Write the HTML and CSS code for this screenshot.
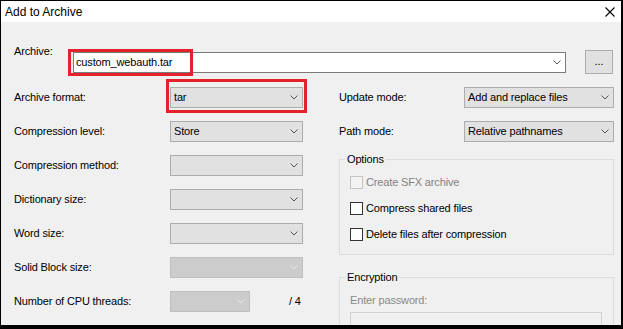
FILE: index.html
```html
<!DOCTYPE html>
<html>
<head>
<meta charset="utf-8">
<link rel="stylesheet" href="styles.css">
</head>
<body>
<div class="window">
  <div class="titlebar">
    <span class="title">Add to Archive</span>
    <svg class="close" width="10" height="10" viewBox="0 0 10 10"><path d="M0.5 0.5L9.5 9.5M9.5 0.5L0.5 9.5" stroke="#000" stroke-width="1.1" fill="none"/></svg>
  </div>
  <div class="content">
    <div class="archive-row">
      <span class="archive-label">Archive:</span>
      <div class="archive-input">
        <span class="value">custom_webauth.tar</span>
        <svg class="chev" width="8" height="5" viewBox="0 0 8 5"><path d="M0.5 0.5L4 4L7.5 0.5" stroke="#555" fill="none"/></svg>
        <span class="hl hl-archive"></span>
      </div>
      <button class="browse">...</button>
    </div>
    <div class="columns">
      <div class="col-left">
        <span class="label">Archive format:</span>
        <div class="combo">
          <span class="value">tar</span>
          <svg class="chev" width="8" height="5" viewBox="0 0 8 5"><path d="M0.5 0.5L4 4L7.5 0.5" stroke="#555" fill="none"/></svg>
          <span class="hl hl-format"></span>
        </div>
        <span class="label">Compression level:</span>
        <div class="combo">
          <span class="value">Store</span>
          <svg class="chev" width="8" height="5" viewBox="0 0 8 5"><path d="M0.5 0.5L4 4L7.5 0.5" stroke="#555" fill="none"/></svg>
        </div>
        <span class="label">Compression method:</span>
        <div class="combo">
          <span class="value"></span>
          <svg class="chev" width="8" height="5" viewBox="0 0 8 5"><path d="M0.5 0.5L4 4L7.5 0.5" stroke="#555" fill="none"/></svg>
        </div>
        <span class="label">Dictionary size:</span>
        <div class="combo">
          <span class="value"></span>
          <svg class="chev" width="8" height="5" viewBox="0 0 8 5"><path d="M0.5 0.5L4 4L7.5 0.5" stroke="#555" fill="none"/></svg>
        </div>
        <span class="label">Word size:</span>
        <div class="combo">
          <span class="value"></span>
          <svg class="chev" width="8" height="5" viewBox="0 0 8 5"><path d="M0.5 0.5L4 4L7.5 0.5" stroke="#555" fill="none"/></svg>
        </div>
        <span class="label">Solid Block size:</span>
        <div class="combo disabled">
          <span class="value"></span>
          <svg class="chev" width="8" height="5" viewBox="0 0 8 5"><path d="M0.5 0.5L4 4L7.5 0.5" stroke="#e6e6e6" fill="none"/></svg>
        </div>
        <span class="label">Number of CPU threads:</span>
        <div class="cpu">
          <div class="combo disabled small">
            <span class="value"></span>
            <svg class="chev" width="8" height="5" viewBox="0 0 8 5"><path d="M0.5 0.5L4 4L7.5 0.5" stroke="#e6e6e6" fill="none"/></svg>
          </div>
          <span class="cpu-total">/ 4</span>
        </div>
      </div>
      <div class="col-right">
        <div class="field-row">
          <span class="label">Update mode:</span>
          <div class="combo">
            <span class="value">Add and replace files</span>
            <svg class="chev" width="8" height="5" viewBox="0 0 8 5"><path d="M0.5 0.5L4 4L7.5 0.5" stroke="#555" fill="none"/></svg>
          </div>
        </div>
        <div class="field-row">
          <span class="label">Path mode:</span>
          <div class="combo">
            <span class="value">Relative pathnames</span>
            <svg class="chev" width="8" height="5" viewBox="0 0 8 5"><path d="M0.5 0.5L4 4L7.5 0.5" stroke="#555" fill="none"/></svg>
          </div>
        </div>
        <fieldset class="group options">
          <legend>Options</legend>
          <div class="check disabled"><span class="box"></span><span>Create SFX archive</span></div>
          <div class="check"><span class="box"></span><span>Compress shared files</span></div>
          <div class="check"><span class="box"></span><span>Delete files after compression</span></div>
        </fieldset>
        <fieldset class="group encryption">
          <legend>Encryption</legend>
          <div class="muted">Enter password:</div>
          <div class="password"></div>
        </fieldset>
      </div>
    </div>
  </div>
</div>
</body>
</html>
```

FILE: styles.css
```css
* { box-sizing: border-box; }
html, body { margin: 0; padding: 0; }
body {
  width: 623px;
  height: 329px;
  overflow: hidden;
  font-family: "Liberation Sans", Arial, sans-serif;
  font-size: 11px;
  letter-spacing: -0.15px;
  color: #000;
  background: #000;
}
.window {
  width: 623px;
  height: 329px;
  border-style: solid;
  border-color: #000;
  border-width: 1px 2px 4px 1px;
  background: #f0f0f0;
  display: flex;
  flex-direction: column;
  overflow: hidden;
}
.titlebar {
  height: 21px;
  flex: none;
  background: #fff;
  display: flex;
  align-items: center;
  justify-content: space-between;
  padding: 0 6px 0 4px;
}
.title { font-size: 12px; letter-spacing: 0; }
.close { display: block; margin-top: 1px; }

.content {
  flex: 1;
  padding: 22px 7px 0 13px;
}
.archive-row {
  display: flex;
  align-items: flex-start;
}
.archive-label {
  width: 59px;
  line-height: 14px;
}
.archive-input {
  flex: 1;
  position: relative;
  margin-top: 8px;
  height: 21px;
  background: #fff;
  border: 1px solid #7a7a7a;
  display: flex;
  align-items: center;
  padding-left: 2px;
}
.value { flex: 1; white-space: nowrap; line-height: 13px; }
.chev { display: block; margin-right: 4px; flex: none; }
.browse {
  margin: 6px 1px 0 19px;
  width: 28px;
  height: 24px;
  padding: 0 0 3px;
  background: #e1e1e1;
  border: 1px solid #adadad;
  font: inherit;
  color: #000;
}
.hl {
  position: absolute;
  border: 3px solid #e3222b;
  pointer-events: none;
}
.hl-archive { left: -6px; top: -4px; width: 125px; height: 27px; }
.hl-format { left: -5px; top: -9px; width: 141px; height: 34px; }

.columns {
  display: flex;
  margin-top: 13px;
}
.col-left {
  width: 289px;
  display: grid;
  grid-template-columns: 156px 133px;
  grid-auto-rows: 21px;
  row-gap: 13px;
  align-items: center;
  align-content: start;
}
.label { line-height: 13px; white-space: nowrap; }
.combo {
  position: relative;
  height: 21px;
  background: #e1e1e1;
  border: 1px solid #adadad;
  display: flex;
  align-items: center;
  padding-left: 3px;
}
.combo.disabled { background: #cccccc; border-color: #bfbfbf; }
.combo.small { width: 80px; }
.cpu { display: flex; align-items: center; }
.cpu-total { margin-left: 39px; line-height: 13px; }

.col-right {
  margin-left: 36px;
  width: 275px;
  display: flex;
  flex-direction: column;
}
.field-row {
  display: grid;
  grid-template-columns: 125px 150px;
  align-items: center;
  height: 21px;
}
.field-row + .field-row { margin-top: 13px; }

.group {
  margin: 0;
  min-width: 0;
  border: 1px solid #dcdcdc;
  padding: 10px 10px 13px 10px;
}
.group legend {
  padding: 0 2px;
  margin-left: -5px;
  line-height: 14px;
}
.options { margin-top: 10px; }
.encryption { margin-top: 15px; }
.check {
  display: flex;
  align-items: center;
  height: 13px;
  line-height: 13px;
  white-space: nowrap;
}
.check + .check { margin-top: 13px; }
.box {
  width: 13px;
  height: 13px;
  border: 1px solid #333;
  background: #fff;
  margin-right: 3px;
  flex: none;
}
.check.disabled { color: #838383; }
.check.disabled .box { border-color: #c4c4c4; background: #f3f3f3; }
.muted { color: #8a8a8a; line-height: 13px; }
.password {
  margin-top: 5px;
  height: 22px;
  width: 252px;
  border: 1px solid #d0d0d0;
  background: #f0f0f0;
}
```
